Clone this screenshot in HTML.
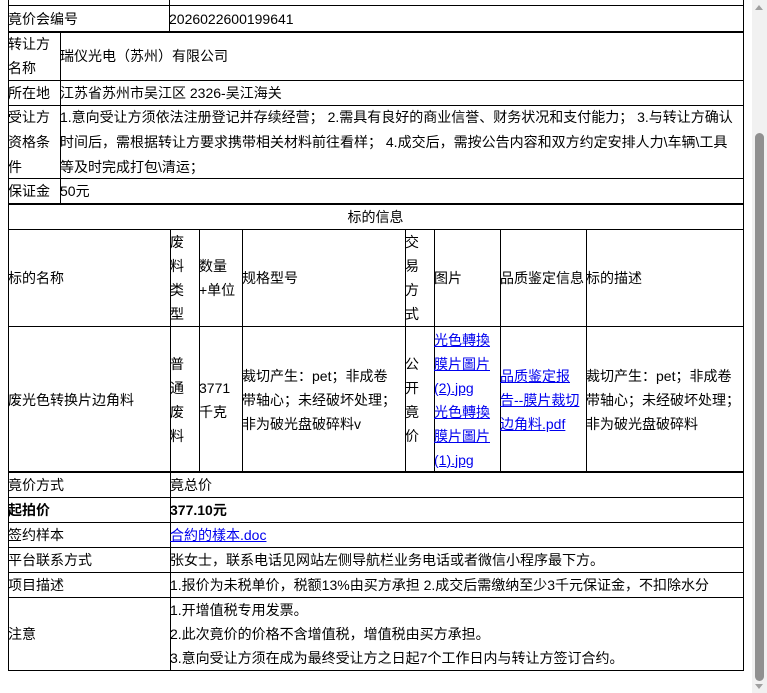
<!DOCTYPE html>
<html><head><meta charset="utf-8"><style>
*{margin:0;padding:0;box-sizing:border-box}
body{width:767px;height:693px;overflow:hidden;background:#fff;position:relative;font-family:"Liberation Sans","Noto Sans CJK SC",sans-serif;font-size:14px;color:#000}
.c{position:absolute;border:1px solid #000;display:flex;align-items:center;padding-left:0;text-indent:-1px;line-height:24px}
.c>div{text-indent:0;margin-left:-1px}
.h{position:absolute;background:#000}
a{color:#00e;text-decoration:underline}
</style></head><body>
<div class="c" style="left:8px;top:-1px;width:162px;height:7px"></div>
<div class="c" style="left:169px;top:-1px;width:575px;height:7px"></div>
<div class="c" style="left:8px;top:5px;width:162px;height:27px">竟价会编号</div>
<div class="c" style="left:169px;top:5px;width:575px;height:27px">2026022600199641</div>
<div class="c" style="left:8px;top:31px;width:53px;height:50px"><div>转让方<br>名称</div></div>
<div class="c" style="left:60px;top:31px;width:684px;height:50px">瑞仪光电（苏州）有限公司</div>
<div class="c" style="left:8px;top:80px;width:53px;height:26px">所在地</div>
<div class="c" style="left:60px;top:80px;width:684px;height:26px">江苏省苏州市吴江区 2326-吴江海关</div>
<div class="c" style="left:8px;top:105px;width:53px;height:74px;line-height:25px"><div>受让方<br>资格条<br>件</div></div>
<div class="c" style="left:60px;top:105px;width:684px;height:74px;line-height:25px"><div>1.意向受让方须依法注册登记并存续经营； 2.需具有良好的商业信誉、财务状况和支付能力； 3.与转让方确认<br>时间后，需根据转让方要求携带相关材料前往看样； 4.成交后，需按公告内容和双方约定安排人力\车辆\工具<br>等及时完成打包\清运；</div></div>
<div class="c" style="left:8px;top:178px;width:53px;height:26px">保证金</div>
<div class="c" style="left:60px;top:178px;width:684px;height:26px">50元</div>
<div class="h" style="left:8px;top:31px;width:736px;height:2px"></div>
<div class="h" style="left:8px;top:203px;width:736px;height:2px"></div>
<div class="c" style="left:8px;top:203px;width:736px;height:27px;justify-content:center">标的信息</div>
<div class="c" style="left:8px;top:229px;width:163px;height:98px">标的名称</div>
<div class="c" style="left:170px;top:229px;width:30px;height:98px"><div>废<br>料<br>类<br>型</div></div>
<div class="c" style="left:199px;top:229px;width:44px;height:98px"><div>数量<br>+单位</div></div>
<div class="c" style="left:242px;top:229px;width:164px;height:98px">规格型号</div>
<div class="c" style="left:405px;top:229px;width:30px;height:98px"><div>交<br>易<br>方<br>式</div></div>
<div class="c" style="left:434px;top:229px;width:67px;height:98px">图片</div>
<div class="c" style="left:500px;top:229px;width:87px;height:98px;white-space:nowrap;overflow:hidden">品质鉴定信息</div>
<div class="c" style="left:586px;top:229px;width:158px;height:98px">标的描述</div>
<div class="c" style="left:8px;top:326px;width:163px;height:147px">废光色转换片边角料</div>
<div class="c" style="left:170px;top:326px;width:30px;height:147px"><div>普<br>通<br>废<br>料</div></div>
<div class="c" style="left:199px;top:326px;width:44px;height:147px"><div>3771<br>千克</div></div>
<div class="c" style="left:242px;top:326px;width:164px;height:147px"><div>裁切产生：pet；非成卷<br>带轴心；未经破坏处理；<br>非为破光盘破碎料v</div></div>
<div class="c" style="left:405px;top:326px;width:30px;height:147px"><div>公<br>开<br>竟<br>价</div></div>
<div class="c" style="left:434px;top:326px;width:67px;height:147px"><div><a>光色轉換<br>膜片圖片<br>(2).jpg</a><br><a>光色轉換<br>膜片圖片<br>(1).jpg</a></div></div>
<div class="c" style="left:500px;top:326px;width:87px;height:147px"><div><a>品质鉴定报<br>告--膜片裁切<br>边角料.pdf</a></div></div>
<div class="c" style="left:586px;top:326px;width:158px;height:147px"><div>裁切产生：pet；非成卷<br>带轴心；未经破坏处理；<br>非为破光盘破碎料</div></div>
<div class="h" style="left:8px;top:471px;width:736px;height:2px"></div>
<div class="c" style="left:8px;top:472px;width:163px;height:26px">竟价方式</div>
<div class="c" style="left:170px;top:472px;width:574px;height:26px">竟总价</div>
<div class="c" style="left:8px;top:497px;width:163px;height:26px;font-weight:bold">起拍价</div>
<div class="c" style="left:170px;top:497px;width:574px;height:26px;font-weight:bold">377.10元</div>
<div class="c" style="left:8px;top:522px;width:163px;height:26px">签约样本</div>
<div class="c" style="left:170px;top:522px;width:574px;height:26px"><div><a>合約的樣本.doc</a></div></div>
<div class="c" style="left:8px;top:547px;width:163px;height:26px">平台联系方式</div>
<div class="c" style="left:170px;top:547px;width:574px;height:26px">张女士，联系电话见网站左侧导航栏业务电话或者微信小程序最下方。</div>
<div class="c" style="left:8px;top:572px;width:163px;height:26px">项目描述</div>
<div class="c" style="left:170px;top:572px;width:574px;height:26px;white-space:nowrap">1.报价为未税单价，税额13%由买方承担 2.成交后需缴纳至少3千元保证金，不扣除水分</div>
<div class="c" style="left:8px;top:597px;width:163px;height:74px">注意</div>
<div class="c" style="left:170px;top:597px;width:574px;height:74px"><div>1.开增值税专用发票。<br>2.此次竟价的价格不含增值税，增值税由买方承担。<br>3.意向受让方须在成为最终受让方之日起7个工作日内与转让方签订合约。</div></div>
<div style="position:absolute;left:752px;top:0;width:15px;height:693px;background:#f1f1f1"></div>
<div style="position:absolute;left:755px;top:133px;width:9px;height:548px;background:#909090;border-radius:5px"></div>
<div style="position:absolute;left:755px;top:5px;width:0;height:0;border-left:4px solid transparent;border-right:4px solid transparent;border-bottom:5px solid #a0a0a0"></div>
<div style="position:absolute;left:755px;top:684px;width:0;height:0;border-left:4px solid transparent;border-right:4px solid transparent;border-top:5px solid #a0a0a0"></div>
</body></html>
